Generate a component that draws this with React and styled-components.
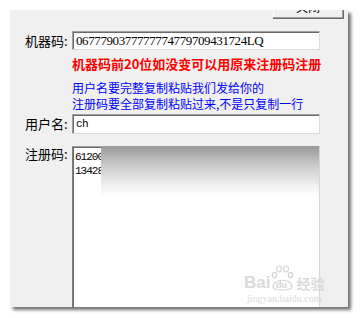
import React from "react";
import styled, { createGlobalStyle } from "styled-components";

const GlobalStyle = createGlobalStyle`
  html, body {
    margin: 0;
    padding: 0;
    background: #ffffff;
  }
  body {
    font-family: "Noto Sans CJK SC", "Liberation Sans", sans-serif;
  }
`;

const Page = styled.div`
  width: 361px;
  height: 318px;
  padding: 10px 0 0 10px;
  box-sizing: border-box;
`;

const Frame = styled.div`
  position: relative;
  width: 338px;
  height: 297px;
  background: #f0f0f0;
  box-shadow: 3px 3px 3px rgba(0, 0, 0, 0.55);
  overflow: hidden;
  display: flex;
  flex-direction: column;
`;

const TopBar = styled.div`
  display: flex;
  justify-content: flex-end;
  padding-right: 4px;
  height: 9px;
`;

const CloseButton = styled.button`
  width: 71px;
  height: 23px;
  margin-top: -14px;
  background: #f0f0f0;
  border: none;
  border-right: 1px solid #6a6a6a;
  border-bottom: 1px solid #6a6a6a;
  box-shadow: inset -1px -1px #a0a0a0, inset 1px 1px #ffffff;
  font-family: "Noto Sans CJK SC", sans-serif;
  font-size: 12px;
  line-height: 12px;
  color: #000;
  padding: 0;
`;

const Form = styled.div`
  display: flex;
  flex-direction: column;
  padding: 12px 0 0 15px;
`;

const Row = styled.div`
  display: flex;
  align-items: ${(p) => (p.$top ? "flex-start" : "center")};
  margin-top: ${(p) => p.$gap || 0}px;
`;

const Label = styled.div`
  width: 47px;
  font-size: 13px;
  color: #000;
  line-height: 16px;
  white-space: nowrap;
`;

const Field = styled.div`
  width: 248px;
  box-sizing: border-box;
  background: #fff;
  height: ${(p) => p.$h}px;
  border-top: 1px solid #a0a0a0;
  border-left: 1px solid #a0a0a0;
  border-right: 1px solid #dcdcdc;
  border-bottom: 1px solid #dcdcdc;
  box-shadow: inset 1px 1px #696969;
  padding: 0 0 0 3px;
  display: flex;
  align-items: center;
`;

const Code = styled.span`
  font-family: "Liberation Serif", serif;
  font-size: 13px;
  color: #000;
  letter-spacing: -0.4px;
`;

const MonoText = styled.span`
  font-family: "Liberation Mono", monospace;
  font-size: 11px;
  letter-spacing: -0.6px;
  color: #000;
`;

const Notice = styled.div`
  margin-left: 47px;
  color: ${(p) => p.$color};
  font-size: ${(p) => p.$size}px;
  font-weight: ${(p) => (p.$bold ? 700 : 400)};
  line-height: 16px;
  margin-top: ${(p) => p.$gap || 0}px;
  white-space: nowrap;
`;

const AreaWrap = styled.div`
  position: relative;
  width: 248px;
  height: 162px;
  box-sizing: border-box;
  background: #fff;
  border-top: 1px solid #a0a0a0;
  border-left: 1px solid #808080;
  border-right: 1px solid #d6d6d6;
  box-shadow: inset 1px 1px #696969;
  padding: 3px 0 0 2px;
  display: flex;
  flex-direction: column;
`;

const AreaLine = styled.div`
  font-family: "Liberation Mono", monospace;
  font-size: 11px;
  letter-spacing: -1px;
  line-height: 14px;
  color: #000;
`;

const Redact = styled.div`
  position: absolute;
  left: 28px;
  top: 0;
  right: 0;
  height: 50px;
  background: linear-gradient(to bottom, #9c9c9c 0%, #c8c8c8 35%, #efefef 75%, #ffffff 100%);
`;

const Watermark = styled.div`
  position: absolute;
  left: 234px;
  top: 255px;
  display: flex;
  flex-direction: column;
  align-items: center;
  color: #dadada;
  pointer-events: none;
`;

const MarkTop = styled.div`
  display: flex;
  align-items: flex-end;
  font-family: "Liberation Sans", sans-serif;
  font-size: 17px;
  line-height: 16px;
  font-weight: 700;
`;

const MarkCjk = styled.span`
  font-family: "Noto Sans CJK SC", sans-serif;
  font-size: 14px;
  line-height: 16px;
  margin-left: 1px;
`;

const MarkUrl = styled.div`
  font-family: "Liberation Serif", serif;
  font-size: 10px;
  line-height: 12px;
  margin-top: 2px;
`;

const Paw = () => (
  <svg width="25" height="26" viewBox="0 0 25 26" fill="none" stroke="#d4d4d4" strokeWidth="1.2">
    <ellipse cx="9" cy="4" rx="2.5" ry="3" />
    <ellipse cx="16" cy="4" rx="2.5" ry="3" />
    <ellipse cx="4.5" cy="10" rx="2.2" ry="2.7" />
    <ellipse cx="20.5" cy="10" rx="2.2" ry="2.7" />
    <path d="M3 22 C3 13, 22 13, 22 22 C22 26, 3 26, 3 22 Z" />
    <text x="6" y="23" fontSize="9" fill="#d4d4d4" stroke="none" fontFamily="Liberation Sans" fontWeight="700">du</text>
  </svg>
);

export default function App() {
  return (
    <>
      <GlobalStyle />
      <Page>
        <Frame>
          <TopBar>
            <CloseButton>关闭</CloseButton>
          </TopBar>
          <Form>
            <Row>
              <Label>机器码:</Label>
              <Field $h={19}>
                <Code>0677790377777774779709431724LQ</Code>
              </Field>
            </Row>
            <Notice $color="#ff0000" $size={13} $bold $gap={6}>
              机器码前20位如没变可以用原来注册码注册
            </Notice>
            <Notice $color="#0000ff" $size={12} $gap={8}>
              用户名要完整复制粘贴我们发给你的
              <br />
              注册码要全部复制粘贴过来,不是只复制一行
            </Notice>
            <Row $gap={2}>
              <Label>用户名:</Label>
              <Field $h={20}>
                <MonoText>ch</MonoText>
              </Field>
            </Row>
            <Row $top $gap={12}>
              <Label>注册码:</Label>
              <AreaWrap>
                <AreaLine>61200</AreaLine>
                <AreaLine>13428</AreaLine>
                <Redact />
              </AreaWrap>
            </Row>
          </Form>
          <Watermark>
            <MarkTop>
              Bai<Paw />
              <MarkCjk>经验</MarkCjk>
            </MarkTop>
            <MarkUrl>jingyan.baidu.com</MarkUrl>
          </Watermark>
        </Frame>
      </Page>
    </>
  );
}
